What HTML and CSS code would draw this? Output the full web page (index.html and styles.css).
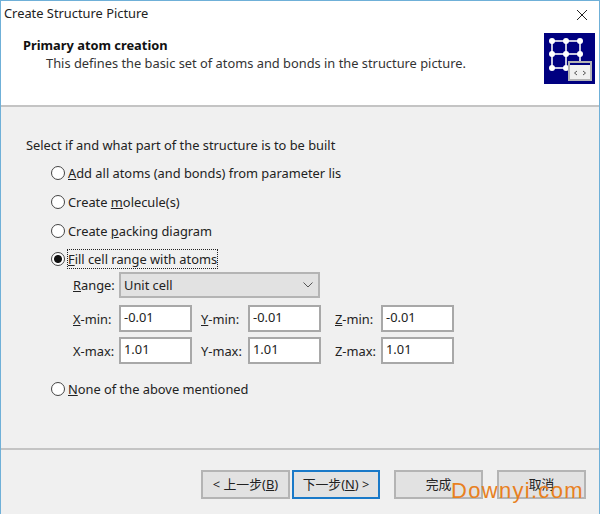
FILE: index.html
```html
<!DOCTYPE html>
<html lang="en">
<head>
    <meta charset="UTF-8">
    <title>Create Structure Picture</title>
    <link rel="stylesheet" href="styles.css">
</head>
<body>
    <div class="window">
        <!-- Title bar -->
        <div class="titlebar">
            <span class="title">Create Structure Picture</span>
            <svg class="close" width="12" height="12" viewBox="0 0 12 12">
                <path d="M1 1L11 11M11 1L1 11" stroke="#222" stroke-width="1" fill="none"/>
            </svg>
        </div>

        <!-- Wizard header -->
        <div class="header">
            <div class="header-text">
                <h1>Primary atom creation</h1>
                <p>This defines the basic set of atoms and bonds in the structure picture.</p>
            </div>
            <svg class="logo" width="51" height="51" viewBox="0 0 51 51">
                <rect width="51" height="51" fill="#000080"/>
                <path d="M8 8H36M8 21H36M8 35H26M8 8V35M22 8V35M36 8V28" stroke="#c8c8e0" stroke-width="2" fill="none"/>
                <g fill="#fff">
                    <circle cx="8" cy="8" r="3"/>
                    <circle cx="22" cy="8" r="3"/>
                    <circle cx="36" cy="8" r="3"/>
                    <circle cx="8" cy="21" r="3"/>
                    <circle cx="22" cy="21" r="3"/>
                    <circle cx="36" cy="21" r="3"/>
                    <circle cx="8" cy="35" r="3"/>
                    <circle cx="22" cy="35" r="3"/>
                </g>
                <rect x="25" y="29" width="22" height="18" fill="#f0f0f0" stroke="#b4b4b4" stroke-width="2"/>
                <rect x="26" y="30" width="20" height="2" fill="#000080"/>
                <path d="M33 38L30.500 40L33 42M39 38L41.500 40L39 42" stroke="#555" stroke-width="1" fill="none"/>
            </svg>
        </div>

        <!-- Options -->
        <div class="content">
            <div class="intro">Select if and what part of the structure is to be built</div>
            <div class="options">
                <div class="option"><span class="radio"></span><span class="option-label"><u>A</u>dd all atoms (and bonds) from parameter lis</span></div>
                <div class="option"><span class="radio"></span><span class="option-label">Create <u>m</u>olecule(s)</span></div>
                <div class="option"><span class="radio"></span><span class="option-label">Create <u>p</u>acking diagram</span></div>
                <div class="option option-fill"><span class="radio checked"></span><span class="option-label focused"><u>F</u>ill cell range with atoms</span></div>
            </div>
            <div class="range-form">
                <label class="field-label"><u>R</u>ange:</label>
                <div class="select">Unit cell
                    <svg width="10" height="6" viewBox="0 0 10 6"><path d="M0.500 0.500L5 5L9.500 0.500" stroke="#555" stroke-width="1" fill="none"/></svg>
                </div>
            </div>
            <div class="limits">
                <label class="field-label"><u>X</u>-min:</label><div class="input">-0.01</div>
                <label class="field-label label-y"><u>Y</u>-min:</label><div class="input">-0.01</div>
                <label class="field-label label-z"><u>Z</u>-min:</label><div class="input">-0.01</div>
                <label class="field-label">X-max:</label><div class="input">1.01</div>
                <label class="field-label label-y">Y-max:</label><div class="input">1.01</div>
                <label class="field-label label-z">Z-max:</label><div class="input">1.01</div>
            </div>
            <div class="option option-last"><span class="radio"></span><span class="option-label"><u>N</u>one of the above mentioned</span></div>
        </div>

        <!-- Buttons -->
        <div class="footer">
            <div class="btn">&lt; 上一步(<u>B</u>)</div>
            <div class="btn btn-default">下一步(<u>N</u>) &gt;</div>
            <div class="btn btn-finish">完成</div>
            <div class="btn btn-cancel">取消</div>
        </div>

        <div class="watermark">Downyi.com</div>
    </div>
</body>
</html>
```

FILE: styles.css
```css
* {
  margin: 0;
  padding: 0;
  box-sizing: border-box;
}

body {
  font-family: "Noto Sans", "Noto Sans CJK SC", sans-serif;
  font-size: 12.85px;
  color: #222;
  background: #f0f0f0;
}

.window {
  position: relative;
  width: 600px;
  height: 514px;
  display: flex;
  flex-direction: column;
  border: 1px solid #6fb0d8;
  border-bottom: none;
  overflow: hidden;
}

/* Title bar */
.titlebar {
  height: 26px;
  flex: none;
  background: #fff;
  display: flex;
  align-items: center;
  justify-content: space-between;
  padding: 0 11px 2px 3px;
}

.close {
  margin-top: 3px;
}

/* Header */
.header {
  height: 78px;
  flex: none;
  background: #fff;
  display: flex;
  justify-content: space-between;
  padding: 6px 4px 0 22px;
}

.header h1 {
  font-size: 12.85px;
  font-weight: 700;
  line-height: 18px;
  color: #111;
  margin-top: 3px;
}

.header p {
  line-height: 18px;
  padding-left: 23px;
  color: #333;
}

/* Content */
.content {
  height: 345px;
  flex: none;
  background: #f0f0f0;
  border-top: 2px solid #c4c4c4;
  border-bottom: 2px solid #c4c4c4;
  padding: 29px 0 0 25px;
}

.intro {
  line-height: 18px;
  margin-bottom: 9px;
}

.options {
  display: flex;
  flex-direction: column;
  gap: 9px;
  padding-left: 25px;
}

.option {
  display: flex;
  align-items: center;
  height: 20px;
}

.option-fill {
  margin-top: -1px;
}

.option-last {
  margin: 15px 0 0 25px;
}

.radio {
  width: 14px;
  height: 14px;
  flex: none;
  border: 1px solid #444;
  border-radius: 50%;
  background: #fff;
  margin-right: 3px;
}

.radio.checked {
  background: radial-gradient(circle, #111 0, #111 3.5px, #fff 4.5px);
}

.option-label {
  white-space: nowrap;
}

.option-label.focused {
  outline: 1px dotted #222;
}

.range-form {
  display: flex;
  align-items: center;
  margin: 3px 0 0 47px;
}

.range-form .field-label {
  width: 46px;
}

.select {
  width: 201px;
  height: 26px;
  display: flex;
  align-items: center;
  justify-content: space-between;
  padding: 0 5px 0 3px;
  background: #e2e2e2;
  border: 2px solid #b4b4b4;
}

.limits {
  display: grid;
  grid-template-columns: 46px 73px 56px 73px 60px 73px;
  grid-auto-rows: 27px;
  row-gap: 5px;
  align-items: center;
  margin: 7px 0 0 47px;
}

.field-label {
  white-space: nowrap;
}

.label-y {
  padding-left: 9px;
}

.label-z {
  padding-left: 14px;
}

.input {
  height: 27px;
  line-height: 20px;
  padding-left: 3px;
  background: #fff;
  border: 2px solid #a8a8a8;
}

/* Footer */
.footer {
  flex: 1;
  display: flex;
  align-items: flex-start;
  padding: 20px 0 0 200px;
  background: #f0f0f0;
}

.btn {
  width: 89px;
  height: 29px;
  line-height: 25px;
  text-align: center;
  background: #e2e2e2;
  border: 2px solid #b4b4b4;
}

.btn-default {
  width: 88px;
  margin-left: 2px;
  border-color: #1979c8;
}

.btn-finish {
  margin-left: 14px;
}

.btn-cancel {
  margin-left: 14px;
}

/* Watermark lies over the buttons */
.watermark {
  position: absolute;
  left: 450px;
  top: 477px;
  font-family: "Liberation Sans", sans-serif;
  font-size: 22px;
  letter-spacing: 1.300px;
  color: #e8801e;
}
```
